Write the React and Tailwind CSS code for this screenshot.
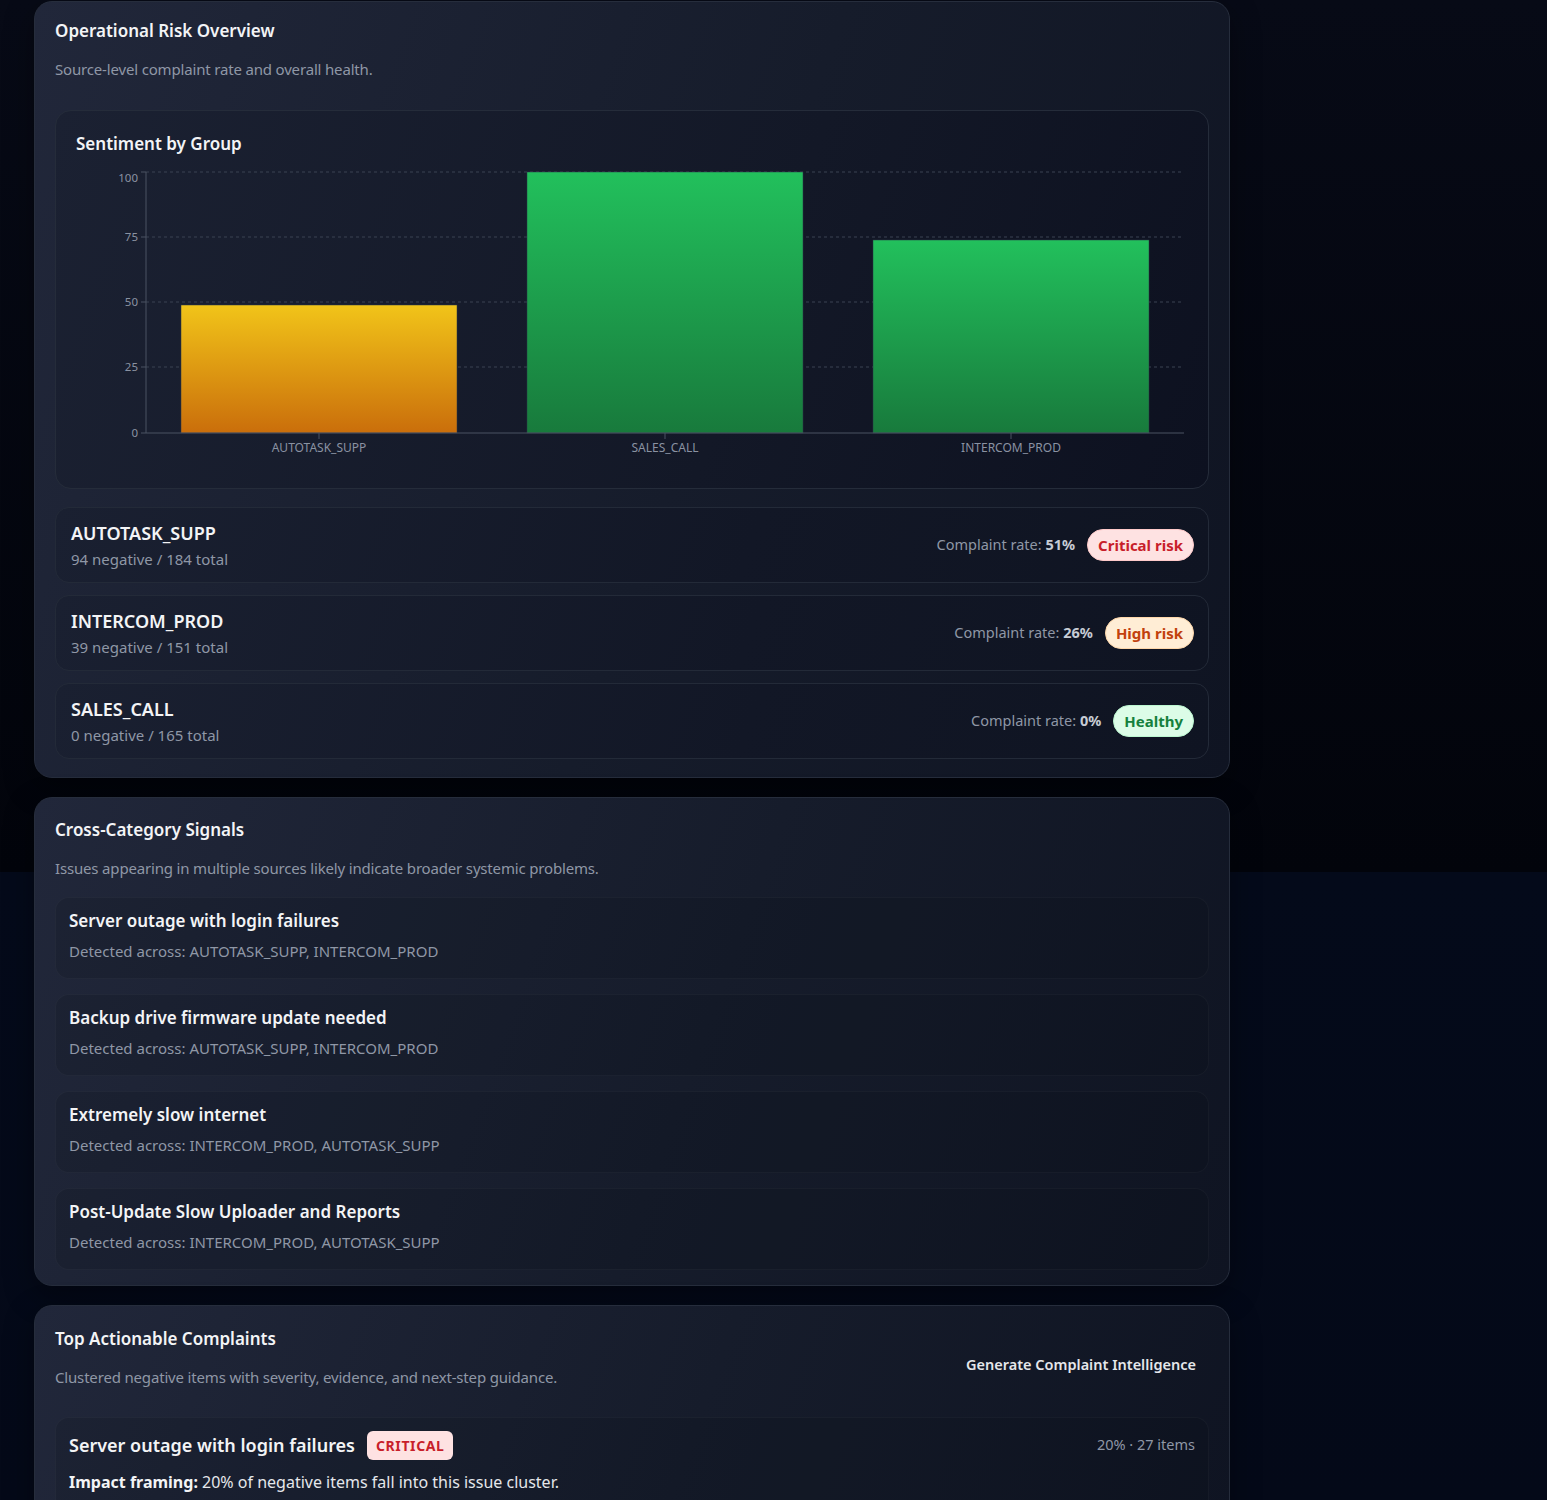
import React from "react";

const sources = [
  { name: "AUTOTASK_SUPP", neg: 94, total: 184, rate: "51%", badge: "Critical risk", tone: "critical" },
  { name: "INTERCOM_PROD", neg: 39, total: 151, rate: "26%", badge: "High risk", tone: "high" },
  { name: "SALES_CALL", neg: 0, total: 165, rate: "0%", badge: "Healthy", tone: "healthy" },
];

const signals = [
  { title: "Server outage with login failures", across: "AUTOTASK_SUPP, INTERCOM_PROD" },
  { title: "Backup drive firmware update needed", across: "AUTOTASK_SUPP, INTERCOM_PROD" },
  { title: "Extremely slow internet", across: "INTERCOM_PROD, AUTOTASK_SUPP" },
  { title: "Post-Update Slow Uploader and Reports", across: "INTERCOM_PROD, AUTOTASK_SUPP" },
];

function Badge({ tone, children }) {
  const cls =
    tone === "critical"
      ? "bg-[#fee2e2] text-[#c81e2a] border-[#fecaca]"
      : tone === "high"
      ? "bg-[#ffedd5] text-[#c2410c] border-[#fed7aa]"
      : "bg-[#dcfce7] text-[#15803d] border-[#bbf7d0]";
  return (
    <span className={`inline-flex items-center h-[32px] px-[10px] rounded-full border text-[15px] font-bold ${cls}`}>
      {children}
    </span>
  );
}

function Chart() {
  const grid = [
    { v: 100, y: 9, ly: 19 },
    { v: 75, y: 74, ly: 78 },
    { v: 50, y: 139, ly: 143 },
    { v: 25, y: 204, ly: 208 },
    { v: 0, y: 270, ly: 274 },
  ];
  const bars = [
    { label: "AUTOTASK_SUPP", x: 105, top: 142, grad: "gy" },
    { label: "SALES_CALL", x: 451, top: 9, grad: "gg" },
    { label: "INTERCOM_PROD", x: 797, top: 77, grad: "gg" },
  ];
  return (
    <svg width="1115" height="300" viewBox="0 0 1115 300" className="block">
      <defs>
        <linearGradient id="gy" x1="0" y1="0" x2="0" y2="1">
          <stop offset="0%" stopColor="#f1c419" />
          <stop offset="100%" stopColor="#ca6e0b" />
        </linearGradient>
        <linearGradient id="gg" x1="0" y1="0" x2="0" y2="1">
          <stop offset="0%" stopColor="#22c05c" />
          <stop offset="100%" stopColor="#187a3c" />
        </linearGradient>
      </defs>
      {grid.map((g) => (
        <g key={g.v}>
          {g.v !== 0 && (
            <line x1="70" x2="1108" y1={g.y} y2={g.y} stroke="#3a4252" strokeDasharray="3 3" strokeWidth="1" />
          )}
          <line x1="65" x2="70" y1={g.y} y2={g.y} stroke="#4b5363" strokeWidth="1" />
          <text x="62" y={g.ly} textAnchor="end" fontSize="11.5" fill="#8a92a2" fontFamily="'Noto Sans', sans-serif">
            {g.v}
          </text>
        </g>
      ))}
      {bars.map((b) => (
        <g key={b.label}>
          <rect x={b.x} y={b.top} width="276" height={270 - b.top} fill={`url(#${b.grad})`} stroke="#2f3a48" strokeWidth="0.5" />
          <line x1={b.x + 138} x2={b.x + 138} y1="270" y2="276" stroke="#4b5363" />
          <text x={b.x + 138} y="289" textAnchor="middle" fontSize="12" fill="#8a92a2" fontFamily="'Noto Sans', sans-serif">
            {b.label}
          </text>
        </g>
      ))}
      <line x1="70" x2="70" y1="9" y2="270" stroke="#4b5363" strokeWidth="1" />
      <line x1="70" x2="1108" y1="270" y2="270" stroke="#4b5363" strokeWidth="1" />
    </svg>
  );
}

const cardCls =
  "rounded-[18px] border border-[#262d3c] bg-[linear-gradient(110deg,#21273a_0%,#161c2b_55%,#0f1422_100%)] px-[20px] shadow-[0_10px_30px_rgba(0,0,0,0.35)]";

const itemCls =
  "rounded-[14px] border border-[rgba(255,255,255,0.035)] bg-[rgba(8,11,20,0.15)]";

export default function App() {
  return (
    <div
      className="min-h-[1500px] w-full text-[#f1f5f9] bg-[linear-gradient(180deg,#070a16_0px,#02040b_872px,#040a1a_872px,#040918_1500px)]"
      style={{ fontFamily: "'Noto Sans', 'Open Sans', sans-serif" }}
    >
      <div className="w-[1196px] ml-[34px] pt-[1px] flex flex-col gap-[19px]">
        {/* Card 1 */}
        <section className={`${cardCls} pt-[16px] pb-[18px]`}>
          <h2 className="text-[17px] font-semibold leading-[26px] text-[#f3f4f6]">Operational Risk Overview</h2>
          <p className="mt-[14px] text-[15px] tracking-[-0.17px] leading-[22px] text-[#8f97a6]">Source-level complaint rate and overall health.</p>

          <div className="mt-[30px] rounded-[16px] border border-[#252c3a] bg-[linear-gradient(110deg,#1b2132_0%,#131827_60%,#0d1120_100%)] px-[20px] pt-[20px] pb-[25px]">
            <h3 className="text-[17px] font-semibold leading-[26px] text-[#f3f4f6]">Sentiment by Group</h3>
            <div className="mt-[6px]">
              <Chart />
            </div>
          </div>

          <div className="mt-[18px] flex flex-col gap-[12px]">
            {sources.map((s) => (
              <div
                key={s.name}
                className="flex items-center justify-between h-[76px] rounded-[14px] border border-[#232a38] bg-[linear-gradient(110deg,#1a2031_0%,#121726_60%,#0f1422_100%)] pl-[15px] pr-[14px]"
              >
                <div className="flex flex-col">
                  <span className="text-[18px] font-semibold leading-[24px] text-[#f3f4f6]">{s.name}</span>
                  <span className="mt-[4px] text-[15px] leading-[20px] text-[#8f97a6]">
                    {s.neg} negative / {s.total} total
                  </span>
                </div>
                <div className="flex items-center gap-[12px]">
                  <span className="text-[14.5px] text-[#8f97a6]">
                    Complaint rate: <b className="font-bold text-[#c7ccd5]">{s.rate}</b>
                  </span>
                  <Badge tone={s.tone}>{s.badge}</Badge>
                </div>
              </div>
            ))}
          </div>
        </section>

        {/* Card 2 */}
        <section className={`${cardCls} pt-[19px] pb-[15px]`}>
          <h2 className="text-[17px] font-semibold leading-[26px] text-[#f3f4f6]">Cross-Category Signals</h2>
          <p className="mt-[14px] text-[15px] tracking-[-0.17px] leading-[22px] text-[#8f97a6]">
            Issues appearing in multiple sources likely indicate broader systemic problems.
          </p>
          <div className="mt-[18px] flex flex-col gap-[15px]">
            {signals.map((s) => (
              <div key={s.title} className={`${itemCls} h-[82px] px-[13px] pt-[10px]`}>
                <div className="text-[17px] font-semibold leading-[26px] text-[#f3f4f6]">{s.title}</div>
                <div className="mt-[6px] text-[15px] leading-[22px] text-[#8f97a6]">Detected across: {s.across}</div>
              </div>
            ))}
          </div>
        </section>

        {/* Card 3 */}
        <section className={`${cardCls} pt-[20px] pb-[30px]`}>
          <div className="flex items-start justify-between">
            <div>
              <h2 className="text-[17px] font-semibold leading-[26px] text-[#f3f4f6]">Top Actionable Complaints</h2>
              <p className="mt-[14px] text-[15px] tracking-[-0.17px] leading-[22px] text-[#8f97a6]">
                Clustered negative items with severity, evidence, and next-step guidance.
              </p>
            </div>
            <button className="mt-[28px] mr-[13px] text-[14.5px] leading-[20px] font-semibold text-[#e5e7eb] bg-transparent">
              Generate Complaint Intelligence
            </button>
          </div>
          <div className={`${itemCls} mt-[29px] px-[13px] pt-[12px] pb-[20px]`}>
            <div className="flex items-center justify-between">
              <div className="flex items-center gap-[12px]">
                <span className="text-[18px] font-semibold leading-[30px] text-[#f3f4f6]">Server outage with login failures</span>
                <span className="inline-flex items-center h-[29px] px-[9px] rounded-[6px] bg-[#fee2e2] text-[#c81e2a] text-[14px] font-bold tracking-[0.6px]">
                  CRITICAL
                </span>
              </div>
              <span className="text-[14.5px] text-[#8f97a6]">20% · 27 items</span>
            </div>
            <p className="mt-[10px] text-[16px] leading-[24px] text-[#e5e7eb]">
              <b className="font-bold text-[#f3f4f6]">Impact framing:</b> 20% of negative items fall into this issue cluster.
            </p>
          </div>
        </section>
      </div>
    </div>
  );
}
